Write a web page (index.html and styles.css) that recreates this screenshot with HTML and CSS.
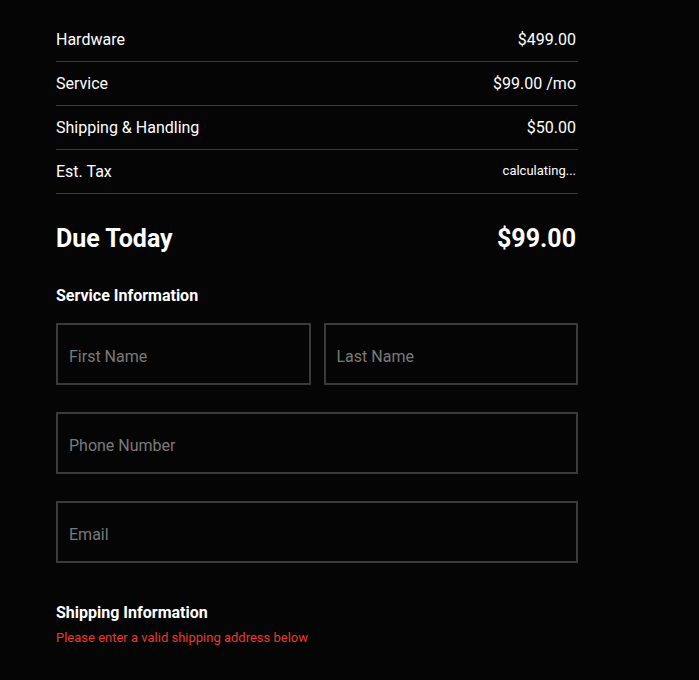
FILE: index.html
```html
<!DOCTYPE html>
<html>
<head>
<meta charset="utf-8">
<link rel="stylesheet" href="styles.css">
</head>
<body>
<div class="checkout">
  <div class="summary">
    <div class="row"><span>Hardware</span><span>$499.00</span></div>
    <div class="row"><span>Service</span><span>$99.00 /mo</span></div>
    <div class="row"><span>Shipping &amp; Handling</span><span>$50.00</span></div>
    <div class="row"><span>Est. Tax</span><span class="small">calculating...</span></div>
  </div>
  <div class="due"><span>Due Today</span><span>$99.00</span></div>
  <h3 class="section-title">Service Information</h3>
  <div class="form">
    <div class="pair">
      <input class="field" type="text" placeholder="First Name">
      <input class="field" type="text" placeholder="Last Name">
    </div>
    <input class="field" type="tel" placeholder="Phone Number">
    <input class="field" type="email" placeholder="Email">
  </div>
  <h3 class="section-title shipping">Shipping Information</h3>
  <p class="error">Please enter a valid shipping address below</p>
</div>
</body>
</html>
```

FILE: styles.css
```css
html, body {
  margin: 0;
  padding: 0;
  background: #050505;
  color: #ffffff;
  font-family: Roboto, "Liberation Sans", sans-serif;
}
.checkout {
  width: 522px;
  margin-left: 56px;
  padding-top: 18px;
}
.row {
  display: flex;
  justify-content: space-between;
  align-items: center;
  height: 43px;
  border-bottom: 1px solid #3a3a3a;
  font-size: 16px;
  padding-right: 2px;
}
.row .small {
  font-size: 13px;
  padding-bottom: 2px;
}
.due {
  display: flex;
  justify-content: space-between;
  align-items: center;
  margin-top: 30px;
  height: 28px;
  font-size: 25px;
  font-weight: 700;
  padding-right: 2px;
}
.section-title {
  margin: 34px 0 0;
  font-size: 16px;
  line-height: 20px;
  font-weight: 700;
}
.form {
  margin-top: 17px;
  display: flex;
  flex-direction: column;
  gap: 27px;
}
.pair {
  display: grid;
  grid-template-columns: 1fr 1fr;
  gap: 13px;
}
.field {
  box-sizing: border-box;
  width: 100%;
  height: 62px;
  margin: 0;
  border: 2px solid #3a3a3a;
  border-radius: 0;
  background: transparent;
  color: #fff;
  padding: 4px 11px 0;
  font-family: Roboto, "Liberation Sans", sans-serif;
  font-size: 16px;
  outline: none;
}
.field::placeholder {
  color: #7a7a7a;
}
.section-title.shipping {
  margin-top: 40px;
}
.error {
  margin: 7px 0 0;
  font-size: 13px;
  line-height: 16px;
  color: #e8392f;
}
```
